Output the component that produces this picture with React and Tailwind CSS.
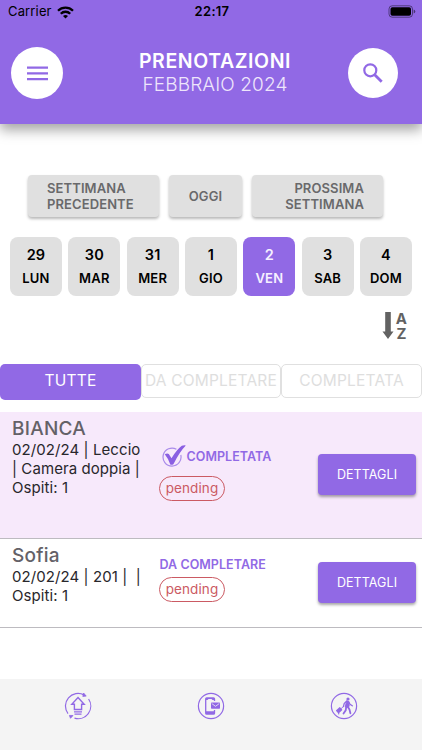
import { useState } from 'react'

const days = [
  { number: 29, label: 'LUN' },
  { number: 30, label: 'MAR' },
  { number: 31, label: 'MER' },
  { number: 1, label: 'GIO' },
  { number: 2, label: 'VEN' },
  { number: 3, label: 'SAB' },
  { number: 4, label: 'DOM' }
]

const bookings = [
  { id: 1, name: 'BIANCA', lines: ['02/02/24 | Leccio', '| Camera doppia |', 'Ospiti: 1'], completed: true },
  { id: 2, name: 'Sofia', lines: ['02/02/24 | 201 |  |', 'Ospiti: 1'], completed: false }
]

function StatusBar() {
  return (
    <div className="flex h-[24px] items-center text-black">
      <div className="flex flex-1 items-center gap-[5px] pl-[8px]">
        <span className="text-[13px] tracking-[0.15px]">Carrier</span>
        <svg width="17" height="13" viewBox="0 0 17 13" fill="none" stroke="currentColor" strokeWidth="2.3">
          <path d="M1 4.7a10.7 10.7 0 0 1 15 0" />
          <path d="M3.8 7.7a6.7 6.7 0 0 1 9.4 0" />
          <path d="M8.5 12.6 6 10.1a3.6 3.6 0 0 1 5 0z" fill="currentColor" stroke="none" />
        </svg>
      </div>
      <span className="text-[13px] font-semibold tracking-[0.3px]">22:17</span>
      <div className="flex flex-1 justify-end pr-[6px]">
        <svg className="mb-[2px]" width="28" height="13" viewBox="0 0 28 13">
          <rect x="1" y="0.8" width="23.5" height="11.4" rx="3.2" fill="none" stroke="#000" strokeOpacity="0.45" />
          <rect x="2.5" y="2.3" width="20.5" height="8.4" rx="1.8" />
          <path d="M25.7 4.5q1.6.6 1.6 2t-1.6 2z" fillOpacity="0.5" />
        </svg>
      </div>
    </div>
  )
}

function Header() {
  return (
    <header className="h-[124px] bg-[#9169e5] shadow-[0_6px_12px_0px_rgba(0,0,0,0.36)]">
      <StatusBar />
      <div className="flex justify-between pl-[11px] pr-[24px]">
        <button className="mt-[23px] flex size-[52px] items-center justify-center rounded-full bg-white">
          <svg width="21" height="15" viewBox="0 0 21 15" fill="#9169e5">
            <path d="M0 .4h21v2.3H0zM0 6.2h21v2.3H0zM0 12h21v2.3H0z" />
          </svg>
        </button>
        <div className="mt-[26px] flex flex-col items-center whitespace-nowrap pl-[19px]">
          <h1 className="text-[19.5px] font-semibold leading-[23px] tracking-[0.6px] text-white">PRENOTAZIONI</h1>
          <p className="text-[19px] font-light leading-[23px] tracking-[0.12px] text-[#eee5fb]">FEBBRAIO 2024</p>
        </div>
        <button className="mt-[24px] flex size-[50px] items-center justify-center rounded-full bg-white">
          <svg width="20" height="20" viewBox="0 0 20 20" fill="none" stroke="#9169e5" strokeWidth="2.2">
            <circle cx="7.3" cy="7.3" r="6" />
            <path d="m11.7 11.7 7 7" strokeWidth="2.8" />
          </svg>
        </button>
      </div>
    </header>
  )
}

function SortIcon() {
  return (
    <div className="flex h-[30px] items-start gap-[2px] text-[#626262]">
      <svg className="mt-[1px]" width="12" height="28" viewBox="0 0 12 28" fill="currentColor">
        <path d="M3.2 0h5.6v19.5h2.700L6 27 .5 19.500h2.700z" />
      </svg>
      <div className="flex flex-col items-center text-[15px] font-bold leading-[15px]">
        <span>A</span>
        <span>Z</span>
      </div>
    </div>
  )
}

function CheckIcon() {
  return (
    <svg width="24" height="23" viewBox="0 0 24 23" fill="none">
      <path d="M14.4 4.2A9 9 0 1 0 18.8 10" stroke="#a98bea" strokeWidth="1.2" />
      <path d="M2.8 9.2q2.200-1.200 4-.3l2.700 4.400Q15.300 3.800 19.800.8q1.900-.8 4-.4Q17.500 6.800 11.400 19.200q-1.700.9-3.100.2Q6.500 13.800 2.800 9.200z" fill="#8a5fe2" />
    </svg>
  )
}

function BookingRow({ booking }) {
  return (
    <div
      className={
        booking.completed
          ? 'flex h-[127px] border-b border-[#bdbbc0] bg-[#f7e9fb]'
          : 'flex h-[89px] border-b border-[#bdbbc0] bg-white'
      }
    >
      <div className="w-[159px] pl-[12px] pt-[6px]">
        <h2 className="text-[19px] font-medium leading-[22px] tracking-[0.25px] text-[#646167]">{booking.name}</h2>
        {booking.lines.map(line => (
          <p key={line} className="whitespace-pre text-[15px] leading-[19px] tracking-[0.08px] text-[#29272c]">{line}</p>
        ))}
      </div>
      <div className={booking.completed ? 'w-[159px] pt-[32px]' : 'w-[159px] pt-[17px]'}>
        <div className={booking.completed ? 'flex h-[24px] items-center gap-[1px] pl-[2.5px]' : 'flex h-[18px] items-center pl-[0.5px]'}>
          {booking.completed && <CheckIcon />}
          <span className={`whitespace-nowrap text-[12.5px] font-semibold tracking-[0.04px] text-[#9169e5] ${booking.completed ? 'pt-[2px]' : ''}`}>
            {booking.completed ? 'COMPLETATA' : 'DA COMPLETARE'}
          </span>
        </div>
        <span className={`flex h-[25px] w-[66px] items-center justify-center rounded-full border border-[#cb5a63] text-[13.5px] tracking-[0.1px] text-[#cb5a63] ${booking.completed ? 'mt-[8px]' : 'mt-[3px]'}`}>
          pending
        </span>
      </div>
      <button
        className={`h-[41px] w-[98px] rounded-[4px] bg-[#9169e5] pt-[2px] text-[12.5px] tracking-[0.08px] text-white shadow-[0_2px_3px_rgba(0,0,0,0.35)] ${booking.completed ? 'mt-[42px]' : 'mt-[23px]'}`}
      >
        DETTAGLI
      </button>
    </div>
  )
}

function Footer() {
  return (
    <footer className="flex h-[71px] justify-between bg-[#f4f4f4] pl-[64px] pr-[64px] pt-[13px] text-[#9169e5]">
      <svg width="28" height="28" viewBox="0 0 28 28" fill="none" stroke="currentColor" strokeWidth="1.2">
        <path d="M4 21.600A12.600 12.600 0 0 1 20 2.900M24.600 7A12.600 12.600 0 0 1 10.500 26.100" />
        <path d="m19.600 1 2.600 3.100-3.400.3zM5.400 23.400l3.600.1-2.500 2.800z" fill="currentColor" strokeWidth="0.800" />
        <path d="m14 5.500 6.200 6.700h-2.600v5.300h-7.200v-5.300H7.800z" strokeWidth="1.400" />
        <path d="M10 19.800h8M10.500 22.200h7" strokeWidth="1.300" />
      </svg>
      <svg width="28" height="28" viewBox="0 0 28 28" fill="none" stroke="currentColor">
        <circle cx="14" cy="14" r="12.600" strokeWidth="1.200" />
        <path d="M17.500 9V6.800q0-1-1-1H9.700q-1 0-1 1v14.400q0 1 1 1h6.800q1 0 1-1V18" strokeWidth="1.300" />
        <path d="M9 6h8v2h-1.500l-1-1h-3l-1 1H9zM9 19.200h8.500v2.800H9z" fill="currentColor" stroke="none" />
        <rect x="14" y="10.500" width="9" height="6.300" rx="0.700" fill="currentColor" stroke="none" />
        <path d="m14.800 11.600 3.700 2.700 3.700-2.700" stroke="#f4f4f4" strokeWidth="0.800" />
      </svg>
      <svg width="28" height="28" viewBox="0 0 28 28" fill="none" stroke="currentColor">
        <circle cx="14" cy="14" r="12.600" strokeWidth="1.200" />
        <circle cx="18" cy="7" r="1.600" fill="currentColor" stroke="none" />
        <path d="m16.700 8.800 1.900.5.600 5-1.700 1.300-2.300-.7z" fill="currentColor" strokeWidth="0.900" />
        <path d="m16.500 9.300-2.300 2.300-.8 3M18.700 9.800l1.300 2.500 2.300 1.500" strokeWidth="1.300" strokeLinecap="round" />
        <path d="m16.200 15-.5 3.300-2.200 3.200M18 15l1.500 2.600.9 3.700" strokeWidth="1.800" strokeLinecap="round" />
        <path d="m13.400 14.600-2.300 2" strokeWidth="0.900" />
        <rect x="6.400" y="16.300" width="5.500" height="4" rx="0.500" transform="rotate(-43 9.100 18.300)" fill="currentColor" stroke="none" />
        <circle cx="8.700" cy="21.700" r=".7" fill="currentColor" stroke="none" />
      </svg>
    </footer>
  )
}

export default function App() {
  const [selectedDay, setSelectedDay] = useState(2)

  return (
    <div className="flex h-[750px] w-[422px] flex-col overflow-hidden bg-white font-['Inter',sans-serif]">
      <Header />

      <div className="mt-[51px] flex h-[42px] gap-[10px] pl-[28px] text-[13px] font-semibold leading-[16px] tracking-[0.1px] text-[#69696b]">
        <button className="w-[131px] rounded-[4px] bg-[#e0e0e0] pb-[1px] pl-[19px] text-left shadow-[0_2px_3px_rgba(0,0,0,0.28)]">
          SETTIMANA<br />PRECEDENTE
        </button>
        <button className="w-[73px] rounded-[4px] bg-[#e0e0e0] pb-[1px] shadow-[0_2px_3px_rgba(0,0,0,0.28)]">OGGI</button>
        <button className="w-[131px] rounded-[4px] bg-[#e0e0e0] pb-[1px] pr-[19px] text-right shadow-[0_2px_3px_rgba(0,0,0,0.28)]">
          PROSSIMA<br />SETTIMANA
        </button>
      </div>

      <div className="mt-[20px] flex justify-between pl-[10px] pr-[10px]">
        {days.map(day => (
          <button
            key={day.number}
            onClick={() => setSelectedDay(day.number)}
            className={`flex h-[59px] w-[52px] flex-col items-center rounded-[8px] pt-[7px] font-semibold ${
              selectedDay === day.number ? 'bg-[#9169e5] text-[#f6f0ff]' : 'bg-[#e0e0e0] text-black'
            }`}
          >
            <span className="text-[14.5px] leading-[22px] tracking-[0.2px]">{day.number}</span>
            <span className="text-[13px] leading-[25px] tracking-[0.2px]">{day.label}</span>
          </button>
        ))}
      </div>

      <div className="mt-[15px] flex justify-end pr-[15px]">
        <SortIcon />
      </div>

      <div className="mt-[23px] flex h-[48px] items-start whitespace-nowrap text-[15.5px] tracking-[0.2px]">
        <button className="h-[36px] w-[141px] rounded-[5px] bg-[#9169e5] pb-[3px] text-white">TUTTE</button>
        <button className="h-[34px] w-[140px] rounded-[5px] border border-[#e0e0e0] pb-[1px] text-[#dedede]">DA COMPLETARE</button>
        <button className="h-[34px] w-[141px] rounded-[5px] border border-[#e0e0e0] pb-[1px] text-[#dedede]">COMPLETATA</button>
      </div>

      <main className="flex-1">
        {bookings.map(booking => (
          <BookingRow key={booking.id} booking={booking} />
        ))}
      </main>

      <Footer />
    </div>
  )
}
